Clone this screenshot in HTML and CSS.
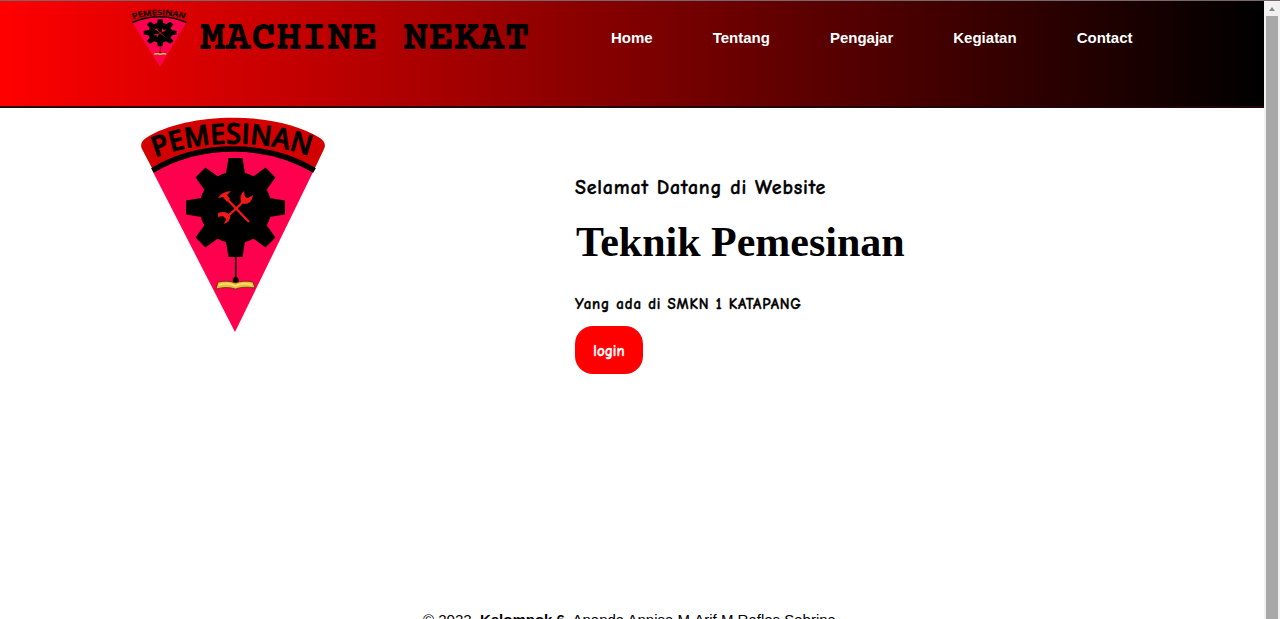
FILE: index.html
```html
<!DOCTYPE html>
<html lang="id">
<head>
<meta charset="utf-8">
<title>Machine Nekat</title>
<link rel="stylesheet" href="styles.css">
</head>
<body>
<svg class="defs" aria-hidden="true">
  <defs>
    <symbol id="emblem" viewBox="0 0 210 230" preserveAspectRatio="none">
      <path fill="#ff004f" d="M22 60Q102 20 184 60L105 222Z"/>
      <path class="emblem-band" d="M12 39Q9 33 16 28C58 1 148 1 190 28Q197 33 194 39L184 60Q102 18 23 60Z"/>
      <path fill="none" stroke="#000" stroke-width="5.500" d="M22.500 60.500Q58 39 103.500 39T184.500 60.500"/>
      <path id="arc" fill="none" d="M25 47.500Q62 33.500 103.500 33.500T185 48"/>
      <text class="emblem-name" textLength="157" lengthAdjust="spacingAndGlyphs"><textPath href="#arc" textLength="157" lengthAdjust="spacingAndGlyphs">PEMESINAN</textPath></text>
      <g transform="translate(105.500 97.500)">
        <circle r="36"/>
        <path id="tooth" d="M-10-31L-7-49.500H7L10-31V31L7 49.500H-7L-10 31Z"/>
        <use href="#tooth" transform="rotate(45)"/><use href="#tooth" transform="rotate(90)"/><use href="#tooth" transform="rotate(135)"/>
      </g>
      <path fill="none" stroke="#f01818" stroke-width="2.400" d="M96 88L119 112M115 90L96 108"/>
      <path fill="#f01818" d="M88 88Q91 82 101 81L97 85L100 89L97 92L93 87ZM111 92Q109 85 114 81L115 87L118 88L123 85Q122 94 114 94ZM88 103Q97 100 100 106Q101 111 94 114L96 109L93 106L88 107Z"/>
      <path stroke="#000" stroke-width="1.600" d="M105.700 146V170"/>
      <circle cx="105.700" cy="170" r="3"/>
      <path fill="#eebc43" stroke="#593400" stroke-width=".8" d="M88 172Q98 170 105.500 173Q113 170 123 172L125 178Q113 176 105.500 179Q97 176 86 179Z"/>
      <path fill="none" stroke="#ffe36c" stroke-width="1.500" d="M89 175Q98 172 105.500 176Q113 172 122 175"/>
    </symbol>
  </defs>
</svg>
<div class="window">
  <div class="page">
    <header class="header">
      <a class="brand"><svg class="brand-logo"><use href="#emblem"/></svg><span class="brand-name">MACHINE NEKAT</span></a>
      <nav class="nav"><a>Home</a><a>Tentang</a><a>Pengajar</a><a>Kegiatan</a><a>Contact</a></nav>
    </header>
    <main class="hero">
      <svg class="hero-logo"><use href="#emblem"/></svg>
      <section class="intro">
        <p class="welcome">Selamat Datang di Website</p>
        <h1 class="title">Teknik Pemesinan</h1>
        <p class="school">Yang ada di SMKN 1 KATAPANG</p>
        <a class="login"><span>login</span></a>
      </section>
    </main>
    <footer class="footer">© 2022. <b>Kelompok 6.</b> Ananda Annisa M.Arif M.Rafles Sabrina</footer>
  </div>
  <div class="scrollbar"><span class="arrow"></span><span class="thumb"></span></div>
</div>
</body>
</html>
```
FILE: styles.css
```css
* { box-sizing: border-box; }
body { margin: 0; overflow: hidden; background: #fff; color: #000; font-family: "Liberation Sans", Arial, sans-serif; }
.defs { position: absolute; width: 0; height: 0; }
.window { display: flex; height: 619px; overflow: hidden; border-top: 1px solid #79686b; }
.page { flex: 1; min-width: 0; height: 618px; overflow: hidden; }
.header { display: flex; height: 107px; padding-left: 125px; background: linear-gradient(90deg, #f00, #000); border-bottom: 2px solid #210508; }
.brand { display: flex; width: 456px; padding-top: 5px; }
.brand-logo { width: 70px; height: 63px; flex: none; }
.brand-name { padding: 10px 0 0 5px; font: bold 42px/48px "Courier Prime", "Liberation Mono", "Courier New", monospace; letter-spacing: .2px; white-space: nowrap; }
.nav { display: flex; height: 72px; align-items: center; font-size: 15px; font-weight: bold; color: #fff; }
.nav a { padding: 0 30px; }
.hero { display: flex; height: 503px; padding-left: 130px; }
.hero-logo { width: 210px; height: 230px; margin-top: 2px; flex: none; }
.emblem-band { fill: #d30000; }
.emblem-name { font: 600 28px "Open Sans", sans-serif; stroke: #000; stroke-width: .8px; }
.intro { margin-left: 235px; padding-top: 65px; font-family: "Comic Sans MS", "Comic Neue", Lato, sans-serif; white-space: nowrap; -webkit-text-stroke: .35px currentColor; }
.welcome, .title, .school { margin: 0; }
.welcome { font-size: 20px; line-height: 30px; font-weight: bold; letter-spacing: .8px; }
.title { padding: 15px 0 0 1px; font: bold 42px/48px "Liberation Serif", "Times New Roman", serif; -webkit-text-stroke: 0; }
.school { padding-top: 26px; font-size: 15px; line-height: 24px; font-weight: bold; letter-spacing: .8px; word-spacing: .2px; }
.login { display: flex; width: 68px; height: 48px; margin-top: 10px; padding-top: 2px; align-items: center; justify-content: center; border-radius: 18px; background: #f00; color: #fff; font-size: 15px; font-weight: bold; }
.footer { padding-left: 423px; font-size: 15px; line-height: 17px; white-space: nowrap; }
.scrollbar { display: flex; flex-direction: column; align-items: center; width: 16px; background: #f1f1f1; }
.arrow { margin: 6px 0 5px; border: 3px solid transparent; border-top: 0; border-bottom: 4px solid #888; }
.thumb { flex: 1; width: 12px; background: #a8a8a8; }
```
